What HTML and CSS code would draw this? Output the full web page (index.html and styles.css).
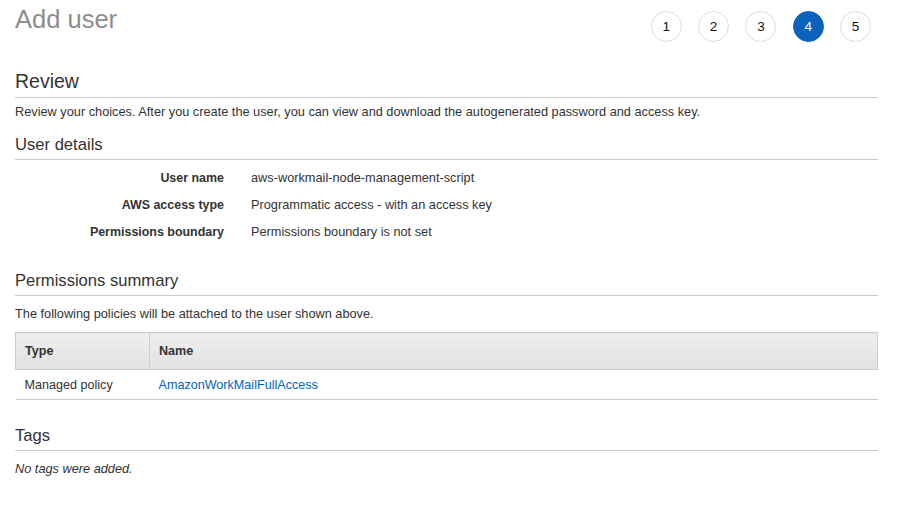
FILE: index.html
```html
<!DOCTYPE html>
<html>
<head>
<meta charset="utf-8">
<link rel="stylesheet" href="styles.css">
</head>
<body>
<div class="page">
  <div class="top">
    <h1 class="title">Add user</h1>
    <ol class="steps">
      <li class="step">1</li>
      <li class="step">2</li>
      <li class="step">3</li>
      <li class="step active">4</li>
      <li class="step">5</li>
    </ol>
  </div>

  <h2 class="section-h review-h">Review</h2>
  <p class="text review-t">Review your choices. After you create the user, you can view and download the autogenerated password and access key.</p>

  <h2 class="section-h details-h">User details</h2>
  <div class="details">
    <div class="label">User name</div><div class="value">aws-workmail-node-management-script</div>
    <div class="label">AWS access type</div><div class="value">Programmatic access - with an access key</div>
    <div class="label">Permissions boundary</div><div class="value">Permissions boundary is not set</div>
  </div>

  <h2 class="section-h perm-h">Permissions summary</h2>
  <p class="text">The following policies will be attached to the user shown above.</p>
  <table class="policies">
    <thead>
      <tr><th class="col-type">Type</th><th>Name</th></tr>
    </thead>
    <tbody>
      <tr><td>Managed policy</td><td><a class="link" href="#">AmazonWorkMailFullAccess</a></td></tr>
    </tbody>
  </table>

  <h2 class="section-h tags-h">Tags</h2>
  <p class="text italic">No tags were added.</p>
</div>
</body>
</html>
```

FILE: styles.css
```css
html, body {
  margin: 0;
  padding: 0;
  background: #fff;
}
body {
  font-family: "Liberation Sans", Arial, Helvetica, sans-serif;
  color: #333;
  font-size: 12.75px;
}
.page {
  padding: 0 37px 0 15px;
}
.top {
  display: flex;
  justify-content: space-between;
  align-items: flex-start;
  height: 60px;
}
.title {
  margin: 4px 0 0 0;
  font-size: 25.5px;
  font-weight: normal;
  color: #8d8d8d;
  line-height: 30px;
}
.steps {
  list-style: none;
  margin: 11px 7px 0 0;
  padding: 0;
  display: flex;
  gap: 16.3px;
}
.step {
  width: 29px;
  height: 29px;
  border: 1px solid #ddd;
  border-radius: 50%;
  display: flex;
  align-items: center;
  justify-content: center;
  font-size: 13.5px;
  color: #111;
  background: #fff;
}
.step.active {
  background: #0a62bd;
  border-color: #0a62bd;
  color: #fff;
}
.section-h {
  margin: 0;
  font-size: 16.6px;
  font-weight: normal;
  color: #333;
  border-bottom: 1px solid #ccc;
  line-height: 20px;
  padding-bottom: 4px;
}
.review-h {
  margin-top: 9px;
  font-size: 19.5px;
  line-height: 24px;
}
.details-h { margin-top: 15px; }
.perm-h { margin-top: 31px; }
.tags-h { margin-top: 26px; }
.text {
  margin: 10px 0 0 0;
  line-height: 16px;
}
.review-t { margin-top: 6px; }
.italic { font-style: italic; }
.details {
  display: grid;
  grid-template-columns: 209px 1fr;
  column-gap: 27px;
  row-gap: 11px;
  margin-top: 10px;
  line-height: 16px;
}
.label {
  text-align: right;
  font-weight: bold;
  font-size: 12.45px;
}
.policies {
  width: 100%;
  border-collapse: collapse;
  margin-top: 10px;
  font-size: 12.6px;
}
.policies th {
  text-align: left;
  font-weight: bold;
  height: 36px;
  padding: 0 9px;
  background: linear-gradient(#efefef, #e1e1e1);
  border: 1px solid #ccc;
}
.policies th.col-type {
  width: 115px;
}
.policies td {
  height: 29px;
  padding: 0 9px;
  border-bottom: 1px solid #ccc;
}
.link {
  color: #0066c0;
  text-decoration: none;
}
```
